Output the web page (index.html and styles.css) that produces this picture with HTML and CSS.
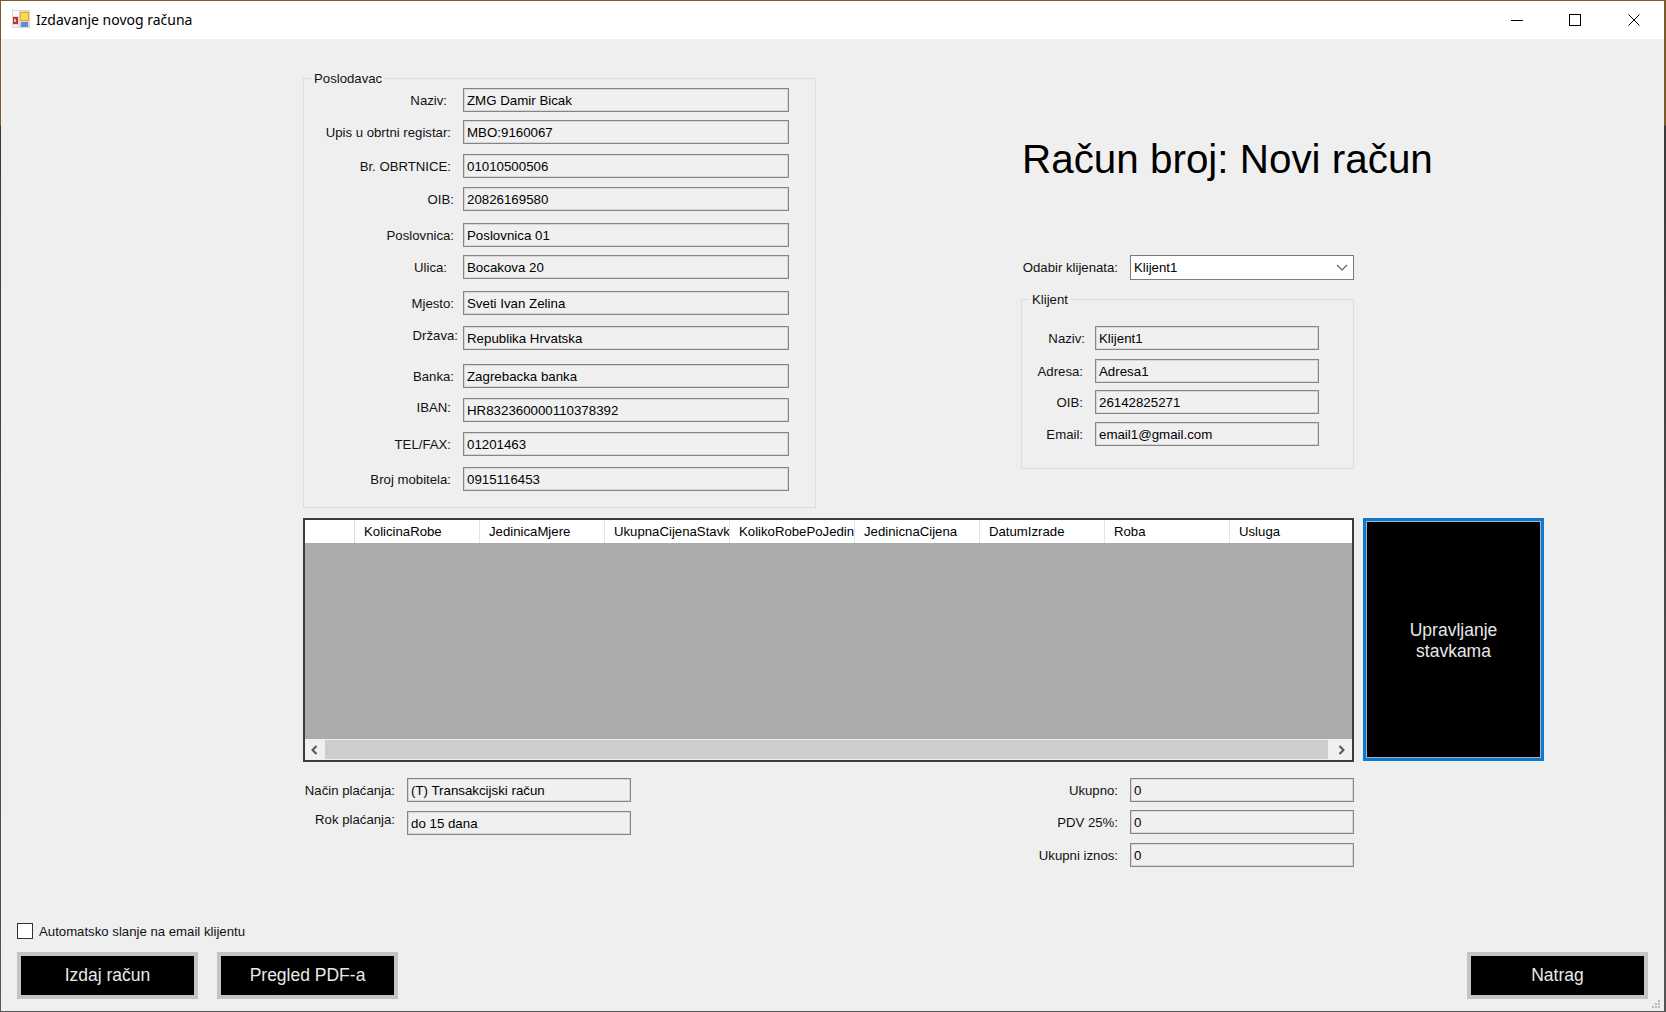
FILE: index.html
```html
<!DOCTYPE html>
<html lang="en">
  <head>
    <meta charset="UTF-8" />
    <title>Izdavanje novog računa</title>
    <link rel="stylesheet" href="styles.css">
  </head>
  <body>
    <div class="window">
      <div class="titlebar">
        <svg class="app-icon" width="18" height="18" viewBox="0 0 18 18">
          <rect width="18" height="18" fill="#d9d9d9" />
          <rect x="1" y="1" width="6" height="5" fill="#fafafa" />
          <rect x="1" y="7" width="5" height="7" fill="#c9302c" />
          <rect x="2" y="9" width="2" height="3" fill="#f2b5b0" />
          <rect x="8" y="2" width="9" height="9" fill="#e6a817" />
          <rect x="9" y="3" width="7" height="7" fill="#fbd75b" />
          <rect x="9" y="12" width="7" height="5" fill="#5b8fd6" />
          <rect x="1" y="15" width="5" height="2" fill="#f4f4f4" />
        </svg>
        <span class="title-text">Izdavanje novog računa</span>
        <div class="controls">
          <div class="control">
            <svg width="12" height="12" viewBox="0 0 12 12"><path d="M0 6.5h12" stroke="#000" fill="none" /></svg>
          </div>
          <div class="control">
            <svg width="12" height="12" viewBox="0 0 12 12"><rect x="0.5" y="0.5" width="11" height="11" stroke="#000" fill="none" /></svg>
          </div>
          <div class="control">
            <svg width="12" height="12" viewBox="0 0 12 12"><path d="M0.5 0.5l11 11M11.5 0.5l-11 11" stroke="#000" fill="none" /></svg>
          </div>
        </div>
      </div>

      <div class="client">
        <div class="top">
          <fieldset class="group employer">
            <legend>Poslodavac</legend>
            <div class="row mt-1"><label class="lbl pr-16">Naziv:</label><div class="field">ZMG Damir Bicak</div></div>
            <div class="row mt-8"><label class="lbl">Upis u obrtni registar:</label><div class="field">MBO:9160067</div></div>
            <div class="row mt-10"><label class="lbl">Br. OBRTNICE:</label><div class="field">01010500506</div></div>
            <div class="row mt-9"><label class="lbl pr-9">OIB:</label><div class="field">20826169580</div></div>
            <div class="row mt-12"><label class="lbl pr-9">Poslovnica:</label><div class="field">Poslovnica 01</div></div>
            <div class="row mt-8"><label class="lbl pr-16">Ulica:</label><div class="field">Bocakova 20</div></div>
            <div class="row mt-12"><label class="lbl pr-9">Mjesto:</label><div class="field">Sveti Ivan Zelina</div></div>
            <div class="row mt-11"><label class="lbl pr-5 up">Država:</label><div class="field">Republika Hrvatska</div></div>
            <div class="row mt-14"><label class="lbl pr-9">Banka:</label><div class="field">Zagrebacka banka</div></div>
            <div class="row mt-10"><label class="lbl up">IBAN:</label><div class="field">HR832360000110378392</div></div>
            <div class="row mt-10"><label class="lbl">TEL/FAX:</label><div class="field">01201463</div></div>
            <div class="row mt-11"><label class="lbl">Broj mobitela:</label><div class="field">0915116453</div></div>
          </fieldset>

          <div class="side">
            <h1 class="invoice-no">Račun broj: Novi račun</h1>
            <div class="picker">
              <label class="lbl picker-lbl">Odabir klijenata:</label>
              <div class="select">
                <span>Klijent1</span>
                <svg width="12" height="7" viewBox="0 0 12 7"><path d="M1 1l5 5 5-5" stroke="#606060" stroke-width="1.2" fill="none" /></svg>
              </div>
            </div>
            <fieldset class="group client-box">
              <legend>Klijent</legend>
              <div class="row mt-18"><label class="lbl pr-10">Naziv:</label><div class="field">Klijent1</div></div>
              <div class="row mt-9"><label class="lbl pr-12">Adresa:</label><div class="field">Adresa1</div></div>
              <div class="row mt-7"><label class="lbl pr-12">OIB:</label><div class="field">26142825271</div></div>
              <div class="row mt-8"><label class="lbl pr-12">Email:</label><div class="field">email1@gmail.com</div></div>
            </fieldset>
          </div>
        </div>

        <div class="middle">
          <div class="grid">
            <div class="grid-head">
              <div class="corner"></div>
              <div class="col">KolicinaRobe</div>
              <div class="col">JedinicaMjere</div>
              <div class="col">UkupnaCijenaStavke</div>
              <div class="col">KolikoRobePoJedinici</div>
              <div class="col">JedinicnaCijena</div>
              <div class="col">DatumIzrade</div>
              <div class="col">Roba</div>
              <div class="col">Usluga</div>
            </div>
            <div class="grid-body"></div>
            <div class="scrollbar">
              <svg width="9" height="10" viewBox="0 0 9 10"><path d="M6.5 1l-4 4 4 4" stroke="#555" stroke-width="2" fill="none" /></svg>
              <div class="thumb"></div>
              <svg width="9" height="10" viewBox="0 0 9 10"><path d="M2.5 1l4 4-4 4" stroke="#555" stroke-width="2" fill="none" /></svg>
            </div>
          </div>
          <button class="btn btn-focus">Upravljanje<br>stavkama</button>
        </div>

        <div class="lower">
          <div class="payment">
            <div class="row"><label class="lbl pr-12 pay-lbl">Način plaćanja:</label><div class="field field-short">(T) Transakcijski račun</div></div>
            <div class="row mt-9"><label class="lbl pr-12 pay-lbl up-2">Rok plaćanja:</label><div class="field field-short">do 15 dana</div></div>
          </div>
          <div class="totals">
            <div class="row"><label class="lbl pr-12 total-lbl">Ukupno:</label><div class="field field-short">0</div></div>
            <div class="row mt-8"><label class="lbl pr-12 total-lbl">PDV 25%:</label><div class="field field-short">0</div></div>
            <div class="row mt-9"><label class="lbl pr-12 total-lbl">Ukupni iznos:</label><div class="field field-short">0</div></div>
          </div>
        </div>

        <div class="footer">
          <label class="check"><span class="box"></span>Automatsko slanje na email klijentu</label>
          <div class="actions">
            <button class="btn btn-action">Izdaj račun</button>
            <button class="btn btn-action">Pregled PDF-a</button>
            <button class="btn btn-action btn-back">Natrag</button>
          </div>
        </div>

        <svg class="grip" width="9" height="9" viewBox="0 0 9 9" fill="#b8b8b8">
          <rect x="6" y="0" width="2" height="2" />
          <rect x="3" y="3" width="2" height="2" />
          <rect x="6" y="3" width="2" height="2" />
          <rect x="0" y="6" width="2" height="2" />
          <rect x="3" y="6" width="2" height="2" />
          <rect x="6" y="6" width="2" height="2" />
        </svg>
      </div>
    </div>
  </body>
</html>
```

FILE: styles.css
```css
* {
  margin: 0;
  padding: 0;
  box-sizing: border-box;
  font-family: "Liberation Sans", Arial, sans-serif;
}

html,
body {
  height: 100%;
  overflow: hidden;
}

body {
  background: linear-gradient(#7b5a2c 0, #7b5a2c 125px, #3a3a3a 126px, #555 1012px);
  font-size: 13.2px;
  color: #111;
}

.window {
  height: 1010px;
  margin: 1px 2px 1px 1px;
  display: flex;
  flex-direction: column;
  background: #efefef;
}

.titlebar {
  height: 38px;
  flex: none;
  background: #fff;
  display: flex;
  align-items: center;
  padding-left: 11px;
}

.app-icon {
  margin: 0 6px 2px 0;
}

.title-text {
  font-family: "Noto Sans", sans-serif;
  font-size: 14px;
  color: #000;
  margin-bottom: 2px;
}

.controls {
  margin-left: auto;
  display: flex;
  padding-right: 1px;
}

.control {
  width: 58.5px;
  height: 38px;
  display: flex;
  align-items: center;
  justify-content: center;
}

.client {
  flex: 1;
  position: relative;
  display: flex;
  flex-direction: column;
}

.top {
  display: flex;
  padding: 30px 0 0 302px;
}

.group {
  border: 1px solid #dcdcdc;
}

.group legend {
  margin-left: 7px;
  padding: 2px 3px 0;
  line-height: 16px;
}

.employer {
  width: 513px;
  height: 439px;
}

.side {
  margin-left: 205px;
  width: 333px;
}

.invoice-no {
  font-weight: normal;
  font-size: 40.4px;
  line-height: 46px;
  color: #000;
  white-space: nowrap;
  margin-top: 67px;
  padding-left: 1px;
}

.picker {
  display: flex;
  align-items: center;
  margin-top: 73px;
}

.picker .picker-lbl {
  width: 109px;
}

.select {
  width: 224px;
  height: 25px;
  background: #fff;
  border: 1px solid #7a7a7a;
  display: flex;
  align-items: center;
  justify-content: space-between;
  padding: 0 5px 0 3px;
  color: #000;
}

.client-box {
  margin-top: 10px;
  height: 179px;
  width: 333px;
}

.client-box .lbl {
  width: 73px;
}

.client-box .field {
  width: 224px;
}

.row {
  display: flex;
  align-items: center;
}

.lbl {
  width: 159px;
  text-align: right;
  padding-right: 12px;
  white-space: nowrap;
}

.up {
  margin-bottom: 6px;
}

.up-2 {
  margin-bottom: 8px;
}

.pr-5 { padding-right: 5px; }
.pr-9 { padding-right: 9px; }
.pr-10 { padding-right: 10px; }
.pr-12 { padding-right: 12px; }
.pr-16 { padding-right: 16px; }

.mt-1 { margin-top: 1px; }
.mt-7 { margin-top: 7px; }
.mt-8 { margin-top: 8px; }
.mt-9 { margin-top: 9px; }
.mt-10 { margin-top: 10px; }
.mt-11 { margin-top: 11px; }
.mt-12 { margin-top: 12px; }
.mt-14 { margin-top: 14px; }
.mt-18 { margin-top: 18px; }

.field {
  width: 326px;
  height: 24px;
  line-height: 24px;
  padding-left: 3px;
  border: 1px solid #858585;
  box-shadow: inset 0 0 0 1px #d6d6d6;
  background: #f0f0f0;
  color: #000;
  font-size: 13.3px;
  white-space: nowrap;
  overflow: hidden;
}

.field-short {
  width: 224px;
}

.middle {
  display: flex;
  margin: 10px 0 0 302px;
}

.grid {
  width: 1051px;
  height: 244px;
  border: 2px solid #3c3c3c;
  background: #ababab;
  display: flex;
  flex-direction: column;
}

.grid-head {
  height: 23px;
  flex: none;
  background: #fff;
  display: flex;
}

.corner {
  width: 50px;
  flex: none;
  border-right: 1px solid #dedede;
}

.col {
  width: 125px;
  flex: none;
  border-right: 1px solid #e4e4e4;
  line-height: 24px;
  padding-left: 9px;
  overflow: hidden;
  white-space: nowrap;
  color: #000;
}

.col:last-child {
  flex: 1;
  border-right: 0;
}

.grid-body {
  flex: 1;
}

.scrollbar {
  height: 21px;
  flex: none;
  background: #f0f0f0;
  display: flex;
  align-items: center;
  padding: 0 6px 0 5px;
  gap: 6px;
}

.thumb {
  flex: 1;
  height: 19px;
  margin-right: 3px;
  background: #cdcdcd;
}

.btn {
  border: 4px solid #c4c4c4;
  background: #000;
  color: #e8e8e8;
  font-size: 17.5px;
}

.btn-focus {
  position: relative;
  width: 181px;
  height: 243px;
  margin-left: 9px;
  padding-top: 2px;
  border: 3px solid #0a7ad6;
  line-height: 21px;
}

/* inner grey line of the focused button */
.btn-focus::after {
  content: "";
  position: absolute;
  inset: 0;
  border: 1px solid #b0b0b0;
}

.lower {
  display: flex;
  margin: 16px 0 0 302px;
}

.pay-lbl {
  width: 104px;
}

.totals {
  margin-left: 231px;
}

.total-lbl {
  width: 268px;
}

.footer {
  margin-top: auto;
  padding: 0 16px 12px 16px;
}

.check {
  display: flex;
  align-items: center;
  gap: 6px;
}

.box {
  width: 16px;
  height: 16px;
  background: #fff;
  border: 1px solid #333;
}

.actions {
  display: flex;
  gap: 19px;
  margin-top: 13px;
}

.btn-action {
  width: 181px;
  height: 47px;
}

.btn-back {
  margin-left: auto;
}

.grip {
  position: absolute;
  right: 3px;
  bottom: 2px;
}
```
